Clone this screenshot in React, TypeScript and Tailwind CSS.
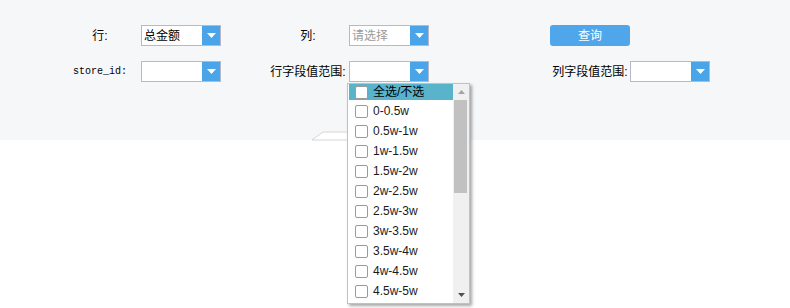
import React from "react";

const FONT = { fontFamily: '"Liberation Sans", "Noto Sans CJK SC", sans-serif' };

const items = [
  "0-0.5w",
  "0.5w-1w",
  "1w-1.5w",
  "1.5w-2w",
  "2w-2.5w",
  "2.5w-3w",
  "3w-3.5w",
  "3.5w-4w",
  "4w-4.5w",
  "4.5w-5w",
];

function Caret() {
  return (
    <svg width="9" height="5" viewBox="0 0 9 5">
      <polygon points="0,0 9,0 4.5,5" fill="#fff" />
    </svg>
  );
}

function Select({ value, placeholder }: { value?: string; placeholder?: string }) {
  return (
    <div className="ml-px flex h-[21px] w-[80px] border border-[#b6b9c9] bg-white">
      <div className="flex flex-1 items-center overflow-hidden pl-[2px] text-[12px] leading-none">
        {value && <span className="text-black">{value}</span>}
        {!value && placeholder && <span className="text-[#9a9a9a]">{placeholder}</span>}
      </div>
      <div className="flex w-[18px] items-center justify-center bg-[#4aa4e8]">
        <Caret />
      </div>
    </div>
  );
}

function Label({ children, mono }: { children: React.ReactNode; mono?: boolean }) {
  return (
    <div
      className={`w-[80px] text-center leading-none text-black ${mono ? "text-[10px]" : "text-[12px]"}`}
      style={mono ? { fontFamily: '"Liberation Mono", monospace' } : undefined}
    >
      {children}
    </div>
  );
}

function Box() {
  return <div className="ml-[6px] h-[13px] w-[13px] shrink-0 rounded-[2px] border border-[#9b9b9b] bg-white" />;
}

export default function App() {
  return (
    <div className="relative h-[308px] w-[790px] overflow-hidden bg-white" style={FONT}>
      <div className="h-[140px] bg-[#f6f7f9] pl-[60px] pt-[25px]">
        <div className="flex h-[21px] items-center">
          <Label>行:</Label>
          <div className="w-[128px]">
            <Select value="总金额" />
          </div>
          <Label>列:</Label>
          <div className="w-[202px]">
            <Select placeholder="请选择" />
          </div>
          <button className="flex h-[21px] w-[80px] items-center justify-center rounded-[3px] bg-[#4fa6ea] text-[12px] leading-none text-white">
            查询
          </button>
        </div>
        <div className="mt-[15px] flex h-[21px] items-center">
          <Label mono>store_id:</Label>
          <div className="w-[128px]">
            <Select />
          </div>
          <Label>行字段值范围:</Label>
          <div className="w-[202px]">
            <Select />
          </div>
          <Label>列字段值范围:</Label>
          <div className="w-[80px]">
            <div className="-ml-px">
              <Select />
            </div>
          </div>
        </div>
      </div>

      {/* collapse tab */}
      <svg className="absolute left-[311px] top-[131px]" width="160" height="10" viewBox="0 0 160 10">
        <polygon points="1,9 12,1 146,1 157,9" fill="#ffffff" stroke="#d6d6d6" strokeWidth="1" />
      </svg>

      {/* dropdown */}
      <div className="absolute left-[347px] top-[83px] flex h-[221px] w-[123px] border border-[#a9c5ea] bg-white shadow-[2px_2px_3px_rgba(0,0,0,0.35)]">
        <div className="flex-1 overflow-hidden pl-px text-[12px] leading-none text-[#1a1a1a]">
          <div className="mb-px flex h-[16px] items-center bg-[#58b3cb]">
            <Box />
            <span className="ml-[5px] text-black">全选/不选</span>
          </div>
          {items.map((it) => (
            <div key={it} className="flex h-[20px] items-center">
              <Box />
              <span className="ml-[5px]">{it}</span>
            </div>
          ))}
        </div>
        <div className="flex w-[16px] flex-col bg-[#f0f0f0]">
          <div className="flex h-[16px] items-center justify-center">
            <svg width="7" height="4" viewBox="0 0 7 4">
              <polygon points="0,4 7,4 3.5,0" fill="#a3a3a3" />
            </svg>
          </div>
          <div className="ml-px h-[93px] w-[13px] bg-[#c1c1c1]" />
          <div className="flex-1" />
          <div className="flex h-[17px] items-center justify-center">
            <svg width="7" height="4" viewBox="0 0 7 4">
              <polygon points="0,0 7,0 3.5,4" fill="#505050" />
            </svg>
          </div>
        </div>
      </div>
    </div>
  );
}
